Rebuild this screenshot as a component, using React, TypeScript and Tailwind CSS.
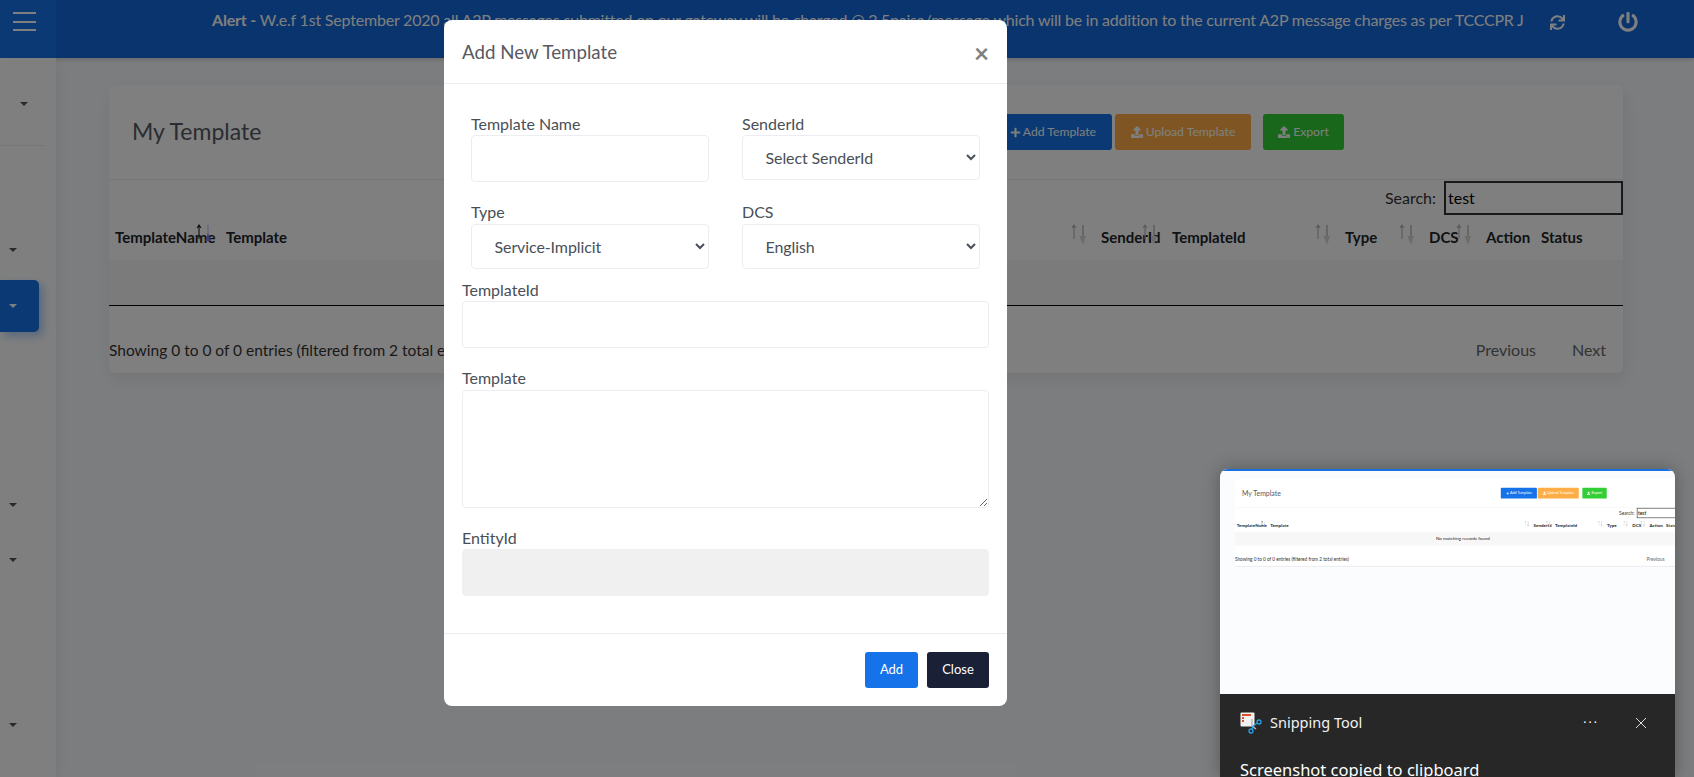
import { FaPlus, FaPowerOff, FaSync, FaUpload } from "react-icons/fa";

const COLUMNS = [
	{ label: "TemplateName", sort: "asc" },
	{ label: "Template", sort: "both" },
	{ label: "SenderId", sort: "both" },
	{ label: "TemplateId", sort: "both" },
	{ label: "Type", sort: "both" },
	{ label: "DCS", sort: "both" },
	{ label: "Action", sort: "" },
	{ label: "Status", sort: "" },
];

function SortArrows({ active }: { active: boolean }) {
	return (
		<svg
			className="absolute right-[9px] top-[8px]"
			width="16"
			height="24"
			viewBox="0 0 16 24"
			fill="none"
		>
			<path
				d="M4 16V2M2 5l2-3 2 3"
				stroke={active ? "#222222" : "#b4b4b4"}
				strokeWidth="1.1"
			/>
			<path d="M13 2v15" stroke={active ? "#c4c4ee" : "#a2a2a2"} strokeWidth="1.1" />
			<path d="M10 18l3-8 3 8z" fill={active ? "#7a7ae0" : "transparent"} />
			{!active && <path d="M9.5 13l3.5 9 3-9z" fill="#d8d8d8" />}
		</svg>
	);
}

function TemplateCard({ thumb }: { thumb?: boolean }) {
	return (
		<div className="h-[288px] w-[1514px] shrink-0 rounded-[5px] bg-white font-['Lato',sans-serif] text-[16px] text-[#212529] shadow-[2px_6px_15px_rgba(69,65,78,0.1)]">
			<div className="flex h-[95px] items-center border-b border-[#ebecec]">
				<h4 className="mb-[2px] ml-[23px] w-[860px] text-[23px] text-[#575962]">My Template</h4>
				<div className="flex text-[12.2px] text-white">
					<span className="flex h-[36px] w-[120px] items-center justify-end gap-[2px] rounded-[3px] bg-[#1572e8] pr-[16px]">
						<FaPlus className="size-[11px]" />
						Add Template
					</span>
					<span className="ml-[3px] flex h-[36px] w-[136px] items-center justify-center gap-[3px] rounded-[3px] bg-[#ffad46]">
						<FaUpload className="size-[12px]" />
						Upload Template
					</span>
					<span className="ml-[12px] flex h-[36px] w-[81px] items-center justify-center gap-[3px] rounded-[3px] bg-[#31ce36]">
						<FaUpload className="size-[12px]" />
						Export
					</span>
				</div>
			</div>
			<div className="flex h-[35px] items-center justify-end">
				<span className="mr-[8px] text-[#333]">Search:</span>
				<input
					readOnly
					value="test"
					className="h-[34px] w-[179px] border-2 border-[#333] px-[2px] text-black"
				/>
			</div>
			<div className="grid h-[45px] grid-cols-[111px_875px_71px_173px_84px_57px_55px_88px] items-center font-bold text-[15px] text-[#212529]">
				{COLUMNS.map((col) => (
					<div key={col.label} className="relative flex h-full items-center pl-[6px]">
						{col.label}
						{col.sort && <SortArrows active={col.sort === "asc"} />}
					</div>
				))}
			</div>
			<div
				className={`flex h-[46px] items-center justify-center bg-[#f7f7f7] text-[15px] ${thumb ? "" : "border-b border-black"}`}
			>
				No matching records found
			</div>
			<div className="flex h-[67px] items-end justify-between pb-[11px] text-[#333]">
				<span className="text-[15.5px]">
					Showing 0 to 0 of 0 entries (filtered from 2 total entries)
				</span>
				<div className="flex gap-[36px] pr-[17px] text-[#666]">
					<span>Previous</span>
					<span>Next</span>
				</div>
			</div>
		</div>
	);
}

function Caret({ white }: { white?: boolean }) {
	return (
		<div
			className={`size-0 border-x-[4px] border-t-[4px] border-x-transparent ${white ? "border-t-white" : "border-t-[#555]"}`}
		/>
	);
}

function Sidebar() {
	return (
		<aside className="flex w-[56px] shrink-0 flex-col bg-white shadow-[4px_4px_10px_rgba(69,65,78,0.06)]">
			<div className="flex h-[88px] w-[45px] items-center border-b border-[#eee] pl-[20px] pt-[4px]">
				<Caret />
			</div>
			<div className="mt-[94px] flex h-[20px] items-center pl-[9px]">
				<Caret />
			</div>
			<div className="mt-[20px] flex h-[52px] w-[39px] items-center rounded-r-[5px] bg-[#1572e8] pl-[9px] shadow-[4px_4px_10px_rgba(21,114,232,0.35)]">
				<Caret white />
			</div>
			<div className="mt-[163px] flex h-[20px] items-center pl-[9px]">
				<Caret />
			</div>
			<div className="mt-[35px] flex h-[20px] items-center pl-[9px]">
				<Caret />
			</div>
			<div className="mt-[145px] flex h-[20px] items-center pl-[9px]">
				<Caret />
			</div>
		</aside>
	);
}

function Header() {
	return (
		<header className="flex h-[58px] shrink-0 bg-[#1269db] text-white shadow-[0_2px_4px_rgba(0,0,0,0.15)]">
			<div className="flex w-[56px] flex-col gap-[6.5px] bg-[#1572e8] pl-[13px] pt-[12px]">
				<span className="h-[2px] w-[23px] bg-white" />
				<span className="h-[2px] w-[23px] bg-white" />
				<span className="h-[2px] w-[23px] bg-white" />
			</div>
			<div className="ml-[156px] w-[1308px] whitespace-nowrap pt-[10px] text-[16px] leading-[20px] tracking-[-0.2px]">
				<b>Alert - </b>
				W.e.f 1st September 2020 all A2P messages submitted on our gateway will be charged @ 2.5paisa/message which will be in addition to the current A2P message charges as per TCCCPR J
			</div>
			<FaSync className="ml-[30px] mt-[15px] size-[15px]" />
			<FaPowerOff className="ml-[53px] mt-[12px] size-[20px]" />
		</header>
	);
}

function Field({
	label,
	className,
	children,
}: {
	label: string;
	className?: string;
	children: React.ReactNode;
}) {
	return (
		<div className={className}>
			<label className="block h-[21px] text-[16px] leading-[20px] text-[#495057]">{label}</label>
			{children}
		</div>
	);
}

const inputClass =
	"block w-full rounded-[4px] border px-[20px] text-[16px] text-[#495057] outline-none";
const selectClass = `${inputClass} h-[45px] border-[#ebedf2] bg-white !pl-[18.5px] tracking-[-0.1px]`;

function TemplateModal() {
	return (
		<div className="absolute left-[444px] top-[20px] flex h-[686px] w-[563px] flex-col rounded-[8px] bg-white font-['Lato',sans-serif]">
			<div className="flex h-[64px] shrink-0 items-center justify-between border-b border-[#ebedf2] px-[18px] pt-[2px]">
				<h5 className="text-[18.7px] text-[#575962]">Add New Template</h5>
				<span className="text-[26px] font-bold leading-none text-[#7f7f7f]">×</span>
			</div>
			<div className="flex-1 px-[18px] pt-[30px]">
				<div className="grid grid-cols-[238px_238px] gap-x-[33px] px-[9px]">
					<Field label="Template Name">
						<input className={`${inputClass} h-[47px] border-[#ebedf2] bg-white`} />
					</Field>
					<Field label="SenderId">
						<select defaultValue="" className={selectClass}>
							<option value="">Select SenderId</option>
						</select>
					</Field>
					<Field label="Type" className="mt-[20px] [&>label]:h-[22px]">
						<select defaultValue="si" className={selectClass}>
							<option value="si">Service-Implicit</option>
						</select>
					</Field>
					<Field label="DCS" className="mt-[20px] [&>label]:h-[22px]">
						<select defaultValue="en" className={selectClass}>
							<option value="en">English</option>
						</select>
					</Field>
				</div>
				<Field label="TemplateId" className="mt-[11px]">
					<input className={`${inputClass} h-[47px] border-[#ebedf2] bg-white`} />
				</Field>
				<Field label="Template" className="mt-[20px] [&>label]:h-[22px]">
					<textarea className={`${inputClass} h-[118px] border-[#ebedf2] bg-white`} />
				</Field>
				<Field label="EntityId" className="mt-[20px]">
					<input disabled className={`${inputClass} h-[47px] border-[#f0f0f0] bg-[#f0f0f0]`} />
				</Field>
			</div>
			<div className="flex h-[73px] shrink-0 items-start justify-end gap-[9px] border-t border-[#ebedf2] pr-[18px] pt-[18px] text-[13px] text-white">
				<button className="h-[36px] w-[53px] rounded-[3px] bg-[#1572e8]">Add</button>
				<button className="h-[36px] w-[62px] rounded-[3px] bg-[#1a2035]">Close</button>
			</div>
		</div>
	);
}

function SnipIcon() {
	return (
		<svg width="22" height="22" viewBox="0 0 22 22" fill="none">
			<rect x="0.5" y="0.5" width="14" height="14" rx="1" fill="#f2f2f2" />
			<rect x="2" y="2" width="9" height="2" fill="#d9512c" />
			<rect x="2" y="5" width="2" height="2" fill="#d9512c" />
			<rect x="2" y="8" width="2" height="2" fill="#d9512c" />
			<path d="M12 7v7l4 3" stroke="#b9b9b9" strokeWidth="1.5" />
			<circle cx="19" cy="10" r="2" stroke="#2a9fe8" strokeWidth="1.3" />
			<circle cx="11" cy="19" r="2" stroke="#2a9fe8" strokeWidth="1.3" />
			<path d="M17 11l-4 3-1 3" stroke="#2a9fe8" strokeWidth="1.2" />
		</svg>
	);
}

function SnipToast() {
	return (
		<div className="absolute left-[1220px] top-[469px] h-[308px] w-[455px] overflow-hidden rounded-t-[8px] shadow-[0_0_18px_rgba(0,0,0,0.3)]">
			<div className="h-[225px] overflow-hidden border-t-2 border-[#1a6fe0] bg-[#fbfcfe] pl-[15px] pt-[8px]">
				<div className="h-[88px] w-[440px] overflow-hidden">
					<div className="w-[1514px] origin-top-left scale-[0.301]">
						<TemplateCard thumb />
					</div>
				</div>
			</div>
			<div className="h-[83px] bg-[#272727] px-[20px] pt-[18px] font-['Noto_Sans',sans-serif] text-white">
				<div className="flex items-center">
					<SnipIcon />
					<span className="ml-[8px] text-[14.5px] text-[#f2f2f2]">Snipping Tool</span>
					<span className="ml-auto mr-[36px] text-[12px] tracking-[2px]">···</span>
					<svg className="mr-[8px]" width="12" height="12" viewBox="0 0 12 12" stroke="#ddd">
						<path d="M1 1l10 10M11 1L1 11" />
					</svg>
				</div>
				<p className="mt-[26px] text-[16.5px] leading-[20px]">Screenshot copied to clipboard</p>
			</div>
		</div>
	);
}

export default function App() {
	return (
		<div className="relative flex h-[777px] w-[1694px] flex-col overflow-hidden bg-[#f9fbfd] font-['Lato',sans-serif]">
			<Header />
			<div className="flex flex-1">
				<Sidebar />
				<main className="pl-[53px] pt-[27px]">
					<TemplateCard />
				</main>
			</div>
			<div className="absolute inset-0 bg-black/50" />
			<TemplateModal />
			<SnipToast />
		</div>
	);
}
